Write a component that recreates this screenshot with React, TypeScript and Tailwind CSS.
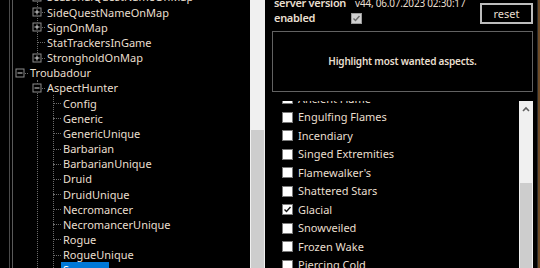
import React from "react";

type TreeRow = {
  label: string;
  level: number;
  box?: "+" | "-";
  selected?: boolean;
};

const treeRows: TreeRow[] = [
  { label: "SeasonalQuestNameOnMap", level: 2, box: "+" },
  { label: "SideQuestNameOnMap", level: 2, box: "+" },
  { label: "SignOnMap", level: 2, box: "+" },
  { label: "StatTrackersInGame", level: 2 },
  { label: "StrongholdOnMap", level: 2, box: "+" },
  { label: "Troubadour", level: 1, box: "-" },
  { label: "AspectHunter", level: 2, box: "-" },
  { label: "Config", level: 3 },
  { label: "Generic", level: 3 },
  { label: "GenericUnique", level: 3 },
  { label: "Barbarian", level: 3 },
  { label: "BarbarianUnique", level: 3 },
  { label: "Druid", level: 3 },
  { label: "DruidUnique", level: 3 },
  { label: "Necromancer", level: 3 },
  { label: "NecromancerUnique", level: 3 },
  { label: "Rogue", level: 3 },
  { label: "RogueUnique", level: 3 },
  { label: "Sorcerer", level: 3, selected: true },
];

const aspects: { name: string; checked?: boolean }[] = [
  { name: "Ancient Flame" },
  { name: "Engulfing Flames" },
  { name: "Incendiary" },
  { name: "Singed Extremities" },
  { name: "Flamewalker's" },
  { name: "Shattered Stars" },
  { name: "Glacial", checked: true },
  { name: "Snowveiled" },
  { name: "Frozen Wake" },
  { name: "Piercing Cold" },
];

const lineX: Record<number, number> = { 1: 20, 2: 37, 3: 53 };

function ExpandBox({ sign }: { sign: "+" | "-" }) {
  return (
    <div className="absolute top-1/2 -translate-x-1/2 -translate-y-1/2 w-[9px] h-[9px] border border-[#8c8c8c] bg-black flex items-center justify-center">
      <div className="w-[5px] h-px bg-[#d8d8d8]" />
      {sign === "+" && <div className="absolute w-px h-[5px] bg-[#d8d8d8]" />}
    </div>
  );
}

function Check({ checked, dim }: { checked?: boolean; dim?: boolean }) {
  return (
    <div
      className={`shrink-0 w-[11px] h-[11px] border flex items-center justify-center ${
        dim ? "bg-[#cfcfcf] border-[#9a9a9a]" : "bg-white border-[#7a7a7a]"
      }`}
    >
      {checked && (
        <svg width="9" height="9" viewBox="0 0 9 9">
          <path d="M1.5 4.5 L3.5 6.5 L7.5 2" fill="none" stroke={dim ? "#6a6a6a" : "#111"} strokeWidth="1.4" />
        </svg>
      )}
    </div>
  );
}

function ScrollBar({ thumbTop, arrow }: { thumbTop: number; arrow?: boolean }) {
  return (
    <div className="h-full bg-[#f0f0f0] flex flex-col">
      {arrow && (
        <div className="h-[15px] flex items-center justify-center">
          <svg width="8" height="6" viewBox="0 0 8 6">
            <path d="M1 5 L4 2 L7 5" fill="none" stroke="#606060" strokeWidth="1.6" />
          </svg>
        </div>
      )}
      <div style={{ height: thumbTop }} />
      <div className="flex-1 mx-px bg-[#cdcdcd]" />
    </div>
  );
}

export default function App() {
  return (
    <div
      className="w-[540px] h-[268px] bg-black overflow-hidden flex text-[11px] text-[#e9dfcf]"
      style={{ fontFamily: '"Noto Sans", "Open Sans", sans-serif' }}
    >
      {/* tree */}
      <div className="relative w-[250px] h-full overflow-hidden">
        <div className="absolute left-[9px] top-0 bottom-0 w-px bg-[#4a4a4a]" />
        <div className="absolute left-[12px] top-0 bottom-0 w-px bg-[#5a5a5a]" />
        <div className="absolute left-[37px] top-0 h-[57px] border-l border-dotted border-[#6a6a6a]" />
        <div className="absolute left-[37px] top-[80px] bottom-0 border-l border-dotted border-[#6a6a6a]" />
        <div className="absolute left-[53px] top-[95px] bottom-0 border-l border-dotted border-[#6a6a6a]" />
        <div className="flex flex-col mt-[-10.6px]">
          {treeRows.map((r, i) => {
            const x = lineX[r.level];
            return (
              <div key={i} className="relative h-[15.17px] flex items-center leading-none">
                <div
                  className="absolute top-1/2 border-t border-dotted border-[#6a6a6a]"
                  style={{ left: x, width: 8 }}
                />
                {r.box && (
                  <div className="absolute top-0 bottom-0" style={{ left: x }}>
                    <ExpandBox sign={r.box} />
                  </div>
                )}
                <span
                  className={`whitespace-nowrap ${r.selected ? "bg-[#0078d7] text-white px-[2px] py-[2px]" : ""}`}
                  style={{ marginLeft: x + (r.selected ? 8 : 10) }}
                >
                  {r.label}
                </span>
              </div>
            );
          })}
        </div>
      </div>

      {/* left scrollbar */}
      <div className="w-[15px] h-full shrink-0">
        <ScrollBar thumbTop={130} />
      </div>

      {/* settings */}
      <div className="flex-1 h-full flex flex-col pr-[4px] overflow-hidden">
        <div className="flex mt-[-4px] h-[35px]">
          <div className="flex flex-col pl-[9px]">
            <div className="flex items-center h-[15px] whitespace-nowrap">
              <span className="w-[81px] shrink-0 font-semibold tracking-[-0.3px]">server version</span>
              <span className="text-[10px] tracking-[-0.2px]">v44, 06.07.2023 02:30:17</span>
            </div>
            <div className="flex items-center h-[14px] whitespace-nowrap">
              <span className="w-[77px] shrink-0 font-semibold tracking-[-0.3px]">enabled</span>
              <Check checked dim />
            </div>
          </div>
          <div className="flex-1" />
          <button className="mt-[7px] w-[53px] h-[21px] shrink-0 border-2 border-[#bdbdbd] bg-black text-[#e9dfcf] leading-none">
            reset
          </button>
        </div>
        <div className="ml-[7px] h-[61px] border border-[#626262] flex items-center justify-center font-semibold text-[10px] tracking-[-0.2px]">
          Highlight most wanted aspects.
        </div>
        <div className="mt-[9px] flex-1 flex overflow-hidden">
          <div className="flex-1 overflow-hidden">
            <div className="flex flex-col mt-[-11.5px] pl-[17px]">
              {aspects.map((a) => (
                <div key={a.name} className="h-[18.5px] flex items-center gap-[5px]">
                  <Check checked={a.checked} />
                  <span className="whitespace-nowrap">{a.name}</span>
                </div>
              ))}
            </div>
          </div>
          <div className="w-[14px] h-full shrink-0">
            <ScrollBar thumbTop={67} arrow />
          </div>
        </div>
      </div>
      <div className="w-px h-full bg-[#2a2a2a]" />
      <div className="w-[2px] h-full bg-[#6e4b27]" />
    </div>
  );
}
